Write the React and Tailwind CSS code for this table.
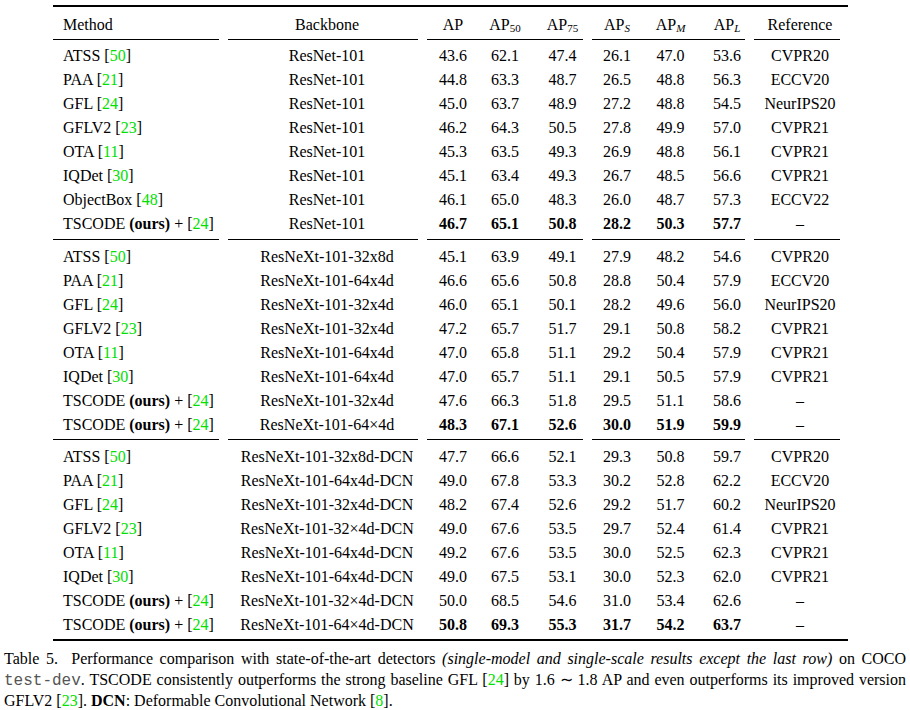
import React from 'react'

const serif = { fontFamily: '"Liberation Serif", "Times New Roman", serif' }

const groups = [
  [
    ['ATSS', '50', 'ResNet-101', ['43.6', '62.1', '47.4', '26.1', '47.0', '53.6'], 'CVPR20'],
    ['PAA', '21', 'ResNet-101', ['44.8', '63.3', '48.7', '26.5', '48.8', '56.3'], 'ECCV20'],
    ['GFL', '24', 'ResNet-101', ['45.0', '63.7', '48.9', '27.2', '48.8', '54.5'], 'NeurIPS20'],
    ['GFLV2', '23', 'ResNet-101', ['46.2', '64.3', '50.5', '27.8', '49.9', '57.0'], 'CVPR21'],
    ['OTA', '11', 'ResNet-101', ['45.3', '63.5', '49.3', '26.9', '48.8', '56.1'], 'CVPR21'],
    ['IQDet', '30', 'ResNet-101', ['45.1', '63.4', '49.3', '26.7', '48.5', '56.6'], 'CVPR21'],
    ['ObjectBox', '48', 'ResNet-101', ['46.1', '65.0', '48.3', '26.0', '48.7', '57.3'], 'ECCV22'],
    ['ours', '24', 'ResNet-101', ['46.7', '65.1', '50.8', '28.2', '50.3', '57.7'], '–', true],
  ],
  [
    ['ATSS', '50', 'ResNeXt-101-32x8d', ['45.1', '63.9', '49.1', '27.9', '48.2', '54.6'], 'CVPR20'],
    ['PAA', '21', 'ResNeXt-101-64x4d', ['46.6', '65.6', '50.8', '28.8', '50.4', '57.9'], 'ECCV20'],
    ['GFL', '24', 'ResNeXt-101-32x4d', ['46.0', '65.1', '50.1', '28.2', '49.6', '56.0'], 'NeurIPS20'],
    ['GFLV2', '23', 'ResNeXt-101-32x4d', ['47.2', '65.7', '51.7', '29.1', '50.8', '58.2'], 'CVPR21'],
    ['OTA', '11', 'ResNeXt-101-64x4d', ['47.0', '65.8', '51.1', '29.2', '50.4', '57.9'], 'CVPR21'],
    ['IQDet', '30', 'ResNeXt-101-64x4d', ['47.0', '65.7', '51.1', '29.1', '50.5', '57.9'], 'CVPR21'],
    ['ours', '24', 'ResNeXt-101-32x4d', ['47.6', '66.3', '51.8', '29.5', '51.1', '58.6'], '–'],
    ['ours', '24', 'ResNeXt-101-64×4d', ['48.3', '67.1', '52.6', '30.0', '51.9', '59.9'], '–', true],
  ],
  [
    ['ATSS', '50', 'ResNeXt-101-32x8d-DCN', ['47.7', '66.6', '52.1', '29.3', '50.8', '59.7'], 'CVPR20'],
    ['PAA', '21', 'ResNeXt-101-64x4d-DCN', ['49.0', '67.8', '53.3', '30.2', '52.8', '62.2'], 'ECCV20'],
    ['GFL', '24', 'ResNeXt-101-32x4d-DCN', ['48.2', '67.4', '52.6', '29.2', '51.7', '60.2'], 'NeurIPS20'],
    ['GFLV2', '23', 'ResNeXt-101-32×4d-DCN', ['49.0', '67.6', '53.5', '29.7', '52.4', '61.4'], 'CVPR21'],
    ['OTA', '11', 'ResNeXt-101-64x4d-DCN', ['49.2', '67.6', '53.5', '30.0', '52.5', '62.3'], 'CVPR21'],
    ['IQDet', '30', 'ResNeXt-101-64x4d-DCN', ['49.0', '67.5', '53.1', '30.0', '52.3', '62.0'], 'CVPR21'],
    ['ours', '24', 'ResNeXt-101-32×4d-DCN', ['50.0', '68.5', '54.6', '31.0', '53.4', '62.6'], '–'],
    ['ours', '24', 'ResNeXt-101-64×4d-DCN', ['50.8', '69.3', '55.3', '31.7', '54.2', '63.7'], '–', true],
  ],
]

const cols = 'grid grid-cols-[171px_206px_46px_58px_57px_52px_55px_58px_88px]'

function Cite({ n }) {
  return <>[<span className="text-[#00e000]">{n}</span>]</>
}

function CmidRules() {
  return (
    <div className="flex h-px">
      <div className="w-[166px] bg-black" />
      <div className="ml-[9px] w-[190px] bg-black" />
      <div className="ml-[9px] w-[156px] bg-black" />
      <div className="ml-[9px] w-[153px] bg-black" />
      <div className="ml-[9px] w-[86px] bg-black" />
    </div>
  )
}

function Row({ row }) {
  const [name, cite, backbone, nums, ref, best] = row
  return (
    <div className={`${cols} h-[24px] leading-[24px] whitespace-nowrap`}>
      <div className="pl-[10px]">
        {name === 'ours' ? <>TSCODE <b>(ours)</b> + </> : <>{name} </>}
        <Cite n={cite} />
      </div>
      <div className="text-center">{backbone}</div>
      {nums.map((v, i) => (
        <div key={i} className={`text-center ${best ? 'font-bold' : ''}`}>{v}</div>
      ))}
      <div className="text-center">{ref}</div>
    </div>
  )
}

function AP({ sub, italic }) {
  return (
    <>AP<sub className={`text-[11px] ${italic ? 'italic' : ''}`}>{sub}</sub></>
  )
}

export default function App() {
  return (
    <div className="w-[910px] h-[710px] bg-white text-black text-[16px] pt-[5px]" style={serif}>
      <div className="ml-[53px] w-[795px]">
        <div className="h-[2px] bg-black" />
        <div className={`${cols} h-[32px] items-center pt-[3px] whitespace-nowrap`}>
          <div className="pl-[10px]">Method</div>
          <div className="text-center">Backbone</div>
          <div className="text-center">AP</div>
          <div className="text-center"><AP sub="50" /></div>
          <div className="text-center"><AP sub="75" /></div>
          <div className="text-center"><AP sub="S" italic /></div>
          <div className="text-center"><AP sub="M" italic /></div>
          <div className="text-center"><AP sub="L" italic /></div>
          <div className="text-center">Reference</div>
        </div>
        {groups.map((g, gi) => (
          <div key={gi}>
            <CmidRules />
            <div className={gi === 0 ? 'pt-[4px] pb-[3px]' : 'pt-[5px] pb-[2px]'}>
              {g.map((r, ri) => <Row key={ri} row={r} />)}
            </div>
          </div>
        ))}
        <div className="h-[2px] bg-black" />
      </div>
      <div className="mt-[8px] ml-[4px] w-[902px] leading-[20.5px]">
        <div className="text-justify [text-align-last:justify] whitespace-nowrap">
          Table 5.&nbsp; Performance comparison with state-of-the-art detectors <i>(single-model and single-scale results except the last row)</i> on COCO
        </div>
        <div className="text-justify [text-align-last:justify]">
          <span className="text-[#555]" style={{ fontFamily: '"Liberation Mono", "Courier New", monospace' }}>test-dev</span>. TSCODE consistently outperforms the strong baseline GFL <Cite n="24" /> by 1.6 ∼ 1.8 AP and even outperforms its improved version
        </div>
        <div>
          GFLV2 <Cite n="23" />. <b>DCN</b>: Deformable Convolutional Network <Cite n="8" />.
        </div>
      </div>
    </div>
  )
}
